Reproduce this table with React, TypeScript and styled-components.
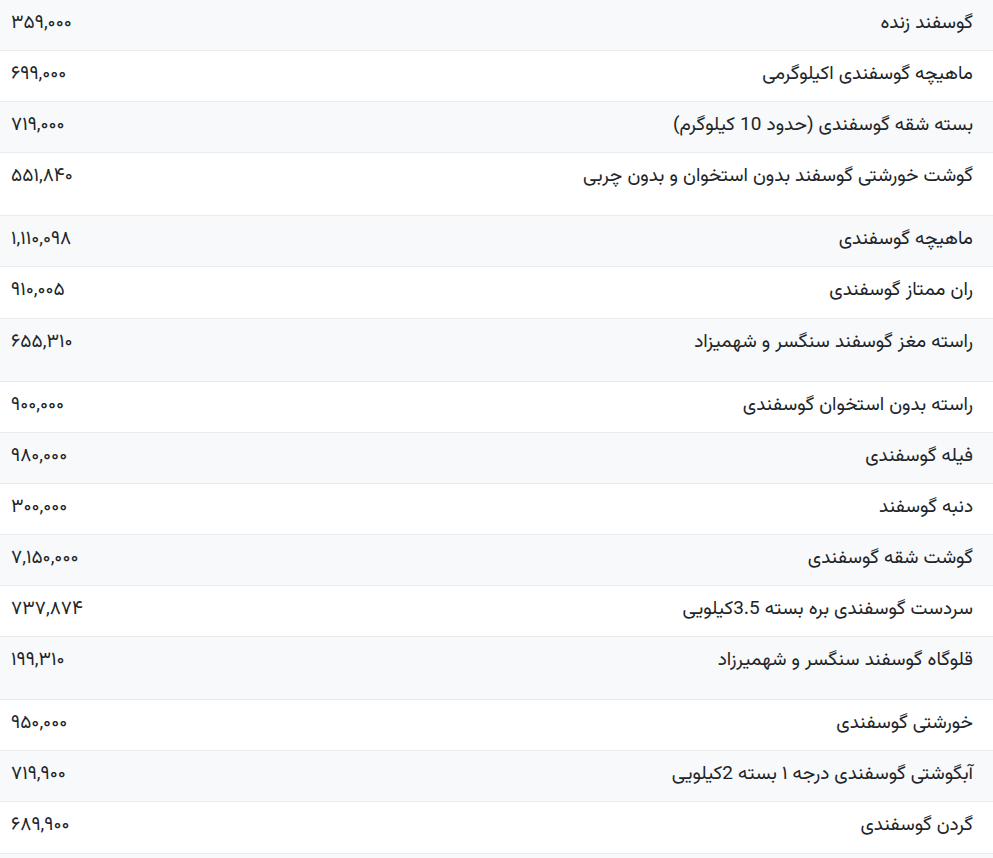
import styled, { createGlobalStyle } from "styled-components";

const GlobalStyle = createGlobalStyle`
  html, body {
    margin: 0;
    padding: 0;
    background: #ffffff;
  }
  body {
    font-family: "Vazirmatn", "Noto Sans Arabic", "DejaVu Sans", sans-serif;
    color: #212529;
  }
`;

const Table = styled.table`
  width: 100%;
  border-collapse: collapse;
  direction: rtl;
  font-size: 19px;
`;

const Row = styled.tr<{ $striped?: boolean }>`
  background-color: ${(p) => (p.$striped ? "#f8f9fa" : "#ffffff")};
  border-bottom: 1px solid #e9ecef;
`;

const NameCell = styled.td<{ $tall?: boolean }>`
  text-align: right;
  vertical-align: top;
  padding: 10px 20px ${(p) => (p.$tall ? "24px" : "12px")} 12px;
  line-height: 28.1px;
  height: 28px;
`;

const PriceCell = styled.td`
  text-align: left;
  vertical-align: top;
  padding: 10px 11px 12px 11px;
  line-height: 28.1px;
  width: 140px;
  white-space: nowrap;
`;

const items: { name: string; price: string; tall?: boolean }[] = [
  { name: "گوسفند زنده", price: "۳۵۹,۰۰۰" },
  { name: "ماهیچه گوسفندی اکیلوگرمی", price: "۶۹۹,۰۰۰" },
  { name: "بسته شقه گوسفندی (حدود 10 کیلوگرم)", price: "۷۱۹,۰۰۰" },
  { name: "گوشت خورشتی گوسفند بدون استخوان و بدون چربی", price: "۵۵۱,۸۴۰", tall: true },
  { name: "ماهیچه گوسفندی", price: "۱,۱۱۰,۰۹۸" },
  { name: "ران ممتاز گوسفندی", price: "۹۱۰,۰۰۵" },
  { name: "راسته مغز گوسفند سنگسر و شهمیزاد", price: "۶۵۵,۳۱۰", tall: true },
  { name: "راسته بدون استخوان گوسفندی", price: "۹۰۰,۰۰۰" },
  { name: "فیله گوسفندی", price: "۹۸۰,۰۰۰" },
  { name: "دنبه گوسفند", price: "۳۰۰,۰۰۰" },
  { name: "گوشت شقه گوسفندی", price: "۷,۱۵۰,۰۰۰" },
  { name: "سردست گوسفندی بره بسته 3.5کیلویی", price: "۷۳۷,۸۷۴" },
  { name: "قلوگاه گوسفند سنگسر و شهمیرزاد", price: "۱۹۹,۳۱۰", tall: true },
  { name: "خورشتی گوسفندی", price: "۹۵۰,۰۰۰" },
  { name: "آبگوشتی گوسفندی درجه ۱ بسته 2کیلویی", price: "۷۱۹,۹۰۰" },
  { name: "گردن گوسفندی", price: "۶۸۹,۹۰۰" },
  { name: "", price: "" },
];

export default function App() {
  return (
    <>
      <GlobalStyle />
      <Table>
        <tbody>
          {items.map((item, index) => (
            <Row key={index} $striped={index % 2 === 0}>
              <NameCell $tall={item.tall}>{item.name}</NameCell>
              <PriceCell>{item.price}</PriceCell>
            </Row>
          ))}
        </tbody>
      </Table>
    </>
  );
}
